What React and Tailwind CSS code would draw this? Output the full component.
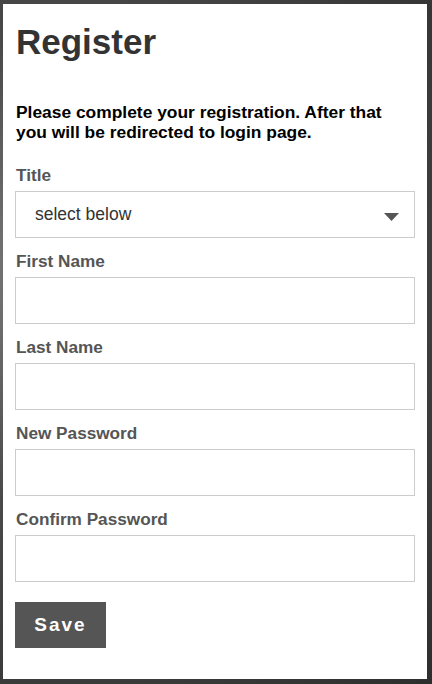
import { useState } from 'react';

const fields = [
    { id: 'firstName', label: 'First Name', type: 'text' },
    { id: 'lastName', label: 'Last Name', type: 'text' },
    { id: 'newPassword', label: 'New Password', type: 'password' },
    { id: 'confirmPassword', label: 'Confirm Password', type: 'password' },
];

function Field({ label, children }) {
    return (
        <div className="mb-[14px]">
            <label className="block text-[17.2px] leading-[18px] font-bold text-[#555] mb-[7px] pl-px">{label}</label>
            {children}
        </div>
    );
}

export default function App() {
    const [title, setTitle] = useState('');

    return (
        <div className="w-full h-[684px] bg-[#4d4d4d] bg-[radial-gradient(circle_at_10%_40%,#7a7a7a_0,#4a4a4a_40%,#2e2e2e_100%)] pt-[4px] pl-[3px] font-['Liberation_Sans',Arial,sans-serif]">
            <div className="w-[424px] h-[675px] bg-white px-[12px] pt-[18px]">
                <h1 className="text-[35px] leading-[40px] font-bold text-[#333] pl-px">Register</h1>

                <p className="mt-[40px] text-[17.4px] leading-[20px] font-bold text-black pl-px">
                    Please complete your registration. After that you will be redirected to login page.
                </p>

                <form className="mt-[24px]" onSubmit={(e) => e.preventDefault()}>
                    <Field label="Title">
                        <div className="relative">
                            <select
                                value={title}
                                onChange={(e) => setTitle(e.target.value)}
                                className="appearance-none w-full h-[47px] border border-[#ccc] bg-white pl-[19px] text-[17.5px] text-[#333] outline-none rounded-none"
                            >
                                <option value="">select below</option>
                                <option value="mr">Mr</option>
                                <option value="mrs">Mrs</option>
                                <option value="ms">Ms</option>
                                <option value="dr">Dr</option>
                            </select>
                            <svg className="absolute right-[16px] top-[22px] pointer-events-none" width="15" height="8" viewBox="0 0 15 8">
                                <path d="M0 0 H15 L7.5 8 Z" fill="#555" />
                            </svg>
                        </div>
                    </Field>

                    {fields.map((f) => (
                        <Field key={f.id} label={f.label}>
                            <input
                                id={f.id}
                                type={f.type}
                                className="block w-full h-[47px] border border-[#ccc] bg-white px-[12px] text-[17px] text-[#333] outline-none"
                            />
                        </Field>
                    ))}

                    <button
                        type="submit"
                        className="mt-[20px] w-[91px] h-[46px] bg-[#555] text-white text-[19px] font-bold tracking-[2px] flex items-center justify-center"
                    >
                        Save
                    </button>
                </form>
            </div>
        </div>
    );
}
